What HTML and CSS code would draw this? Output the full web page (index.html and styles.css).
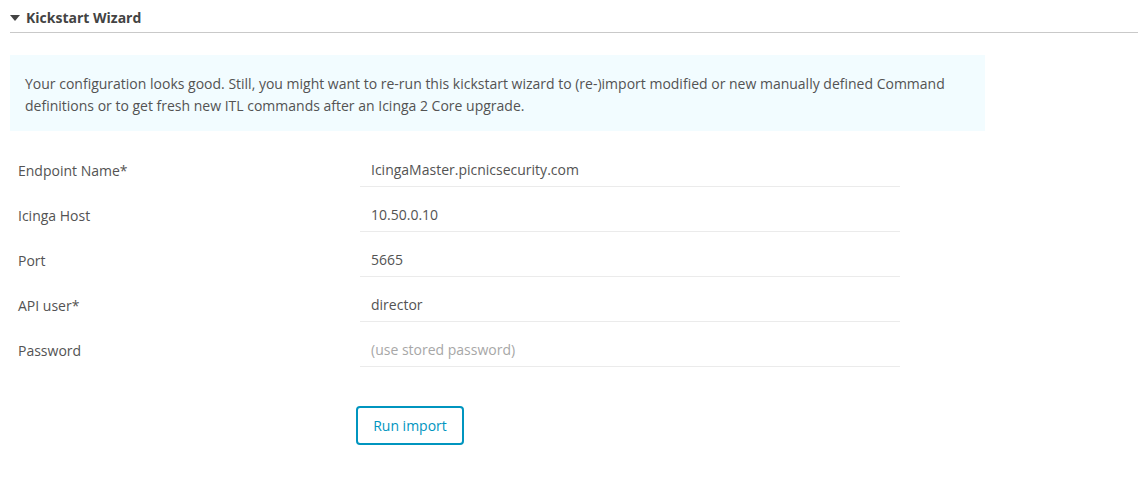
FILE: index.html
```html
<!DOCTYPE html>
<html>
<head>
<meta charset="utf-8">
<link rel="stylesheet" href="styles.css">
</head>
<body>
<div class="page">
  <h2 class="section-title"><span class="caret"></span>Kickstart Wizard</h2>
  <div class="info">Your configuration looks good. Still, you might want to re-run this kickstart wizard to (re-)import modified or new manually defined Command definitions or to get fresh new ITL commands after an Icinga 2 Core upgrade.</div>
  <form class="form">
    <div class="row"><label>Endpoint Name*</label><div class="input">IcingaMaster.picnicsecurity.com</div></div>
    <div class="row"><label>Icinga Host</label><div class="input">10.50.0.10</div></div>
    <div class="row"><label>Port</label><div class="input">5665</div></div>
    <div class="row"><label>API user*</label><div class="input">director</div></div>
    <div class="row"><label>Password</label><div class="input placeholder">(use stored password)</div></div>
    <div class="actions"><button type="button" class="btn">Run import</button></div>
  </form>
</div>
</body>
</html>
```
FILE: styles.css
```css
html, body { margin: 0; padding: 0; background: #fff; }
body {
  font-family: "Open Sans", "Noto Sans", sans-serif;
  font-size: 14px;
  color: #535353;
}
.page { padding: 0 7px 0 10px; }
.section-title {
  margin: 0;
  height: 33px;
  box-sizing: border-box;
  padding-top: 9px;
  border-bottom: 1px solid #c9c9c9;
  font-size: 14px;
  font-weight: bold;
  color: #434343;
  display: flex;
  align-items: flex-start;
  line-height: 18px;
}
.caret {
  width: 0; height: 0;
  border-left: 5px solid transparent;
  border-right: 5px solid transparent;
  border-top: 6px solid #434343;
  margin: 6px 6px 0 0;
}
.info {
  margin-top: 22px;
  width: 975px;
  box-sizing: border-box;
  background: #f2fcff;
  padding: 18px 15px 14px 15px;
  line-height: 22px;
  font-size: 14px;
}
.form { margin-top: 17px; }
.row {
  display: flex;
  height: 45px;
  align-items: stretch;
}
.row label {
  width: 342px;
  padding-left: 8px;
  line-height: 45px;
}
.input {
  width: 540px;
  box-sizing: border-box;
  height: 39px;
  padding: 4px 11px 0;
  line-height: 36px;
  border-bottom: 1px solid #ebebeb;
  color: #535353;
}
.input.placeholder { color: #a7a7a7; }
.actions { padding: 33px 0 0 346px; }
.btn {
  font: inherit;
  width: 108px;
  height: 39px;
  background: #fff;
  color: #0095bf;
  border: 2px solid #0095bf;
  border-radius: 4px;
  padding: 0;
}
```
